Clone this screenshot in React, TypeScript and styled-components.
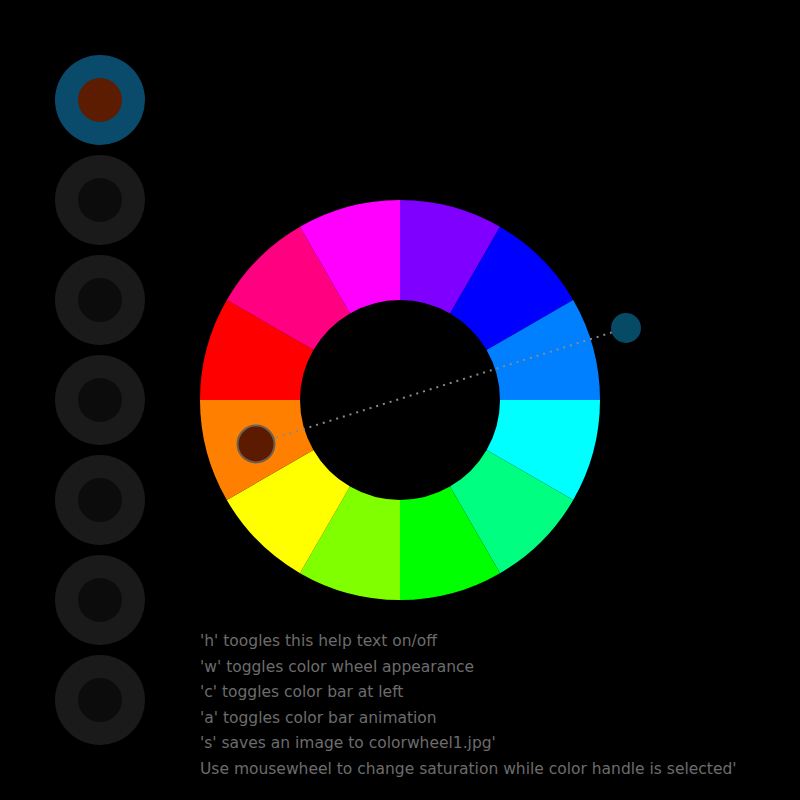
import React from "react";
import styled, { createGlobalStyle } from "styled-components";

const Global = createGlobalStyle`
  html, body { margin: 0; padding: 0; background: #000; }
  body { width: 800px; height: 800px; overflow: hidden; }
`;

const Page = styled.div`
  display: flex;
  flex-direction: row;
  width: 800px;
  height: 800px;
  background: #000;
`;

const Bar = styled.div`
  display: flex;
  flex-direction: column;
  gap: 10px;
  padding: 55px 0 0 55px;
`;

const Swatch = styled.div<{ $outer: string; $inner: string }>`
  width: 90px;
  height: 90px;
  border-radius: 50%;
  background: ${(p) => p.$outer};
  display: flex;
  align-items: center;
  justify-content: center;
  &::after {
    content: "";
    width: 44px;
    height: 44px;
    border-radius: 50%;
    background: ${(p) => p.$inner};
  }
`;

const Main = styled.div`
  display: flex;
  flex-direction: column;
  padding: 200px 0 0 55px;
`;

const Wheel = styled.svg`
  display: block;
`;

const Help = styled.div`
  margin-top: 29px;
  font-family: "DejaVu Sans", "Open Sans", sans-serif;
  font-size: 15.5px;
  line-height: 25.6px;
  color: #6c6c6c;
  white-space: nowrap;
`;

const Line = styled.div``;

const colors = [
  "#8000ff", "#0000ff", "#0080ff", "#00ffff", "#00ff80", "#00ff00",
  "#80ff00", "#ffff00", "#ff8000", "#ff0000", "#ff0080", "#ff00ff",
];

function segPath(cx: number, cy: number, r1: number, r2: number, a0: number, a1: number) {
  const rad = (a: number) => (a * Math.PI) / 180;
  const p = (r: number, a: number) => [cx + r * Math.cos(rad(a)), cy - r * Math.sin(rad(a))];
  const [x0, y0] = p(r2, a0);
  const [x1, y1] = p(r2, a1);
  const [x2, y2] = p(r1, a1);
  const [x3, y3] = p(r1, a0);
  return `M${x0} ${y0} A${r2} ${r2} 0 0 1 ${x1} ${y1} L${x2} ${y2} A${r1} ${r1} 0 0 0 ${x3} ${y3} Z`;
}

const help = [
  "'h' toogles this help text on/off",
  "'w' toggles color wheel appearance",
  "'c' toggles color bar at left",
  "'a' toggles color bar animation",
  "'s' saves an image to colorwheel1.jpg'",
  "Use mousewheel to change saturation while color handle is selected'",
];

export default function App() {
  const cx = 200;
  const cy = 200;
  return (
    <>
      <Global />
      <Page>
        <Bar>
          <Swatch $outer="#0a4b6b" $inner="#5c1c02" />
          {Array.from({ length: 6 }).map((_, i) => (
            <Swatch key={i} $outer="#1a1a1a" $inner="#0c0c0c" />
          ))}
        </Bar>
        <Main>
          <Wheel width={450} height={400} viewBox="0 0 450 400">
            {colors.map((c, i) => (
              <path key={i} d={segPath(cx, cy, 100, 200, 90 - i * 30, 60 - i * 30)} fill={c} />
            ))}
            <line
              x1={56}
              y1={244}
              x2={426}
              y2={128}
              stroke="#8a8a8a"
              strokeWidth={2}
              strokeDasharray="2 5"
            />
            <circle cx={56} cy={244} r={18.5} fill="#5c1a00" stroke="#6d6050" strokeWidth={2} />
            <circle cx={426} cy={128} r={15} fill="#064a66" />
          </Wheel>
          <Help>
            {help.map((t) => (
              <Line key={t}>{t}</Line>
            ))}
          </Help>
        </Main>
      </Page>
    </>
  );
}
